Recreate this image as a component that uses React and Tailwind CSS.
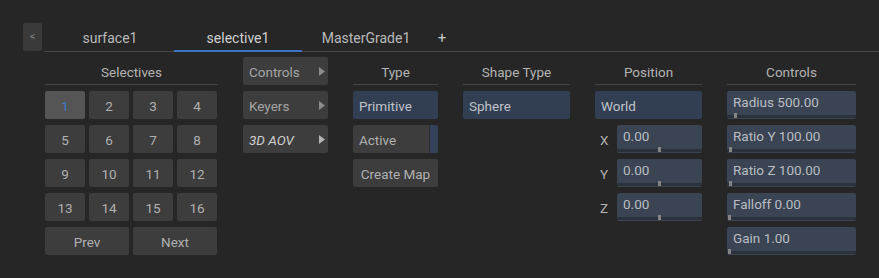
import React, { useState } from 'react';

const font = { fontFamily: 'Roboto, "Noto Sans", sans-serif' };

const Arrow = ({ bright }) => (
  <svg width="6" height="9" viewBox="0 0 6 9" className="ml-auto">
    <path d="M0 0 L6 4.5 L0 9 Z" fill={bright ? '#b5b5b5' : '#8c8c8c'} />
  </svg>
);

const Header = ({ children }) => (
  <div className="h-[28px] pt-[3px] flex items-center justify-center border-b border-[#454545] text-[#b3b3b3]">
    {children}
  </div>
);

// slider field with a small handle on a dark track at the bottom
const Slider = ({ label, pos, width = 'w-full' }) => (
  <div className={`${width} h-[28px] rounded-[2px] bg-[#3a4452] flex flex-col`}>
    <div className="flex-1 flex items-center pl-[6px] text-[#b9bdc3] leading-none">{label}</div>
    <div className="h-[3px] mb-px bg-[#2b323c] relative">
      <div className="absolute bottom-0 w-[3px] h-[5px] bg-[#858585]" style={{ left: pos }} />
    </div>
  </div>
);

export default function App() {
  const [tab, setTab] = useState(1);
  const [sel, setSel] = useState(1);
  const tabs = ['surface1', 'selective1', 'MasterGrade1'];

  return (
    <div className="w-[879px] h-[278px] bg-[#262626] text-[13.5px] overflow-hidden" style={font}>
      {/* Tabs */}
      <div className="flex pt-[23px] pl-[23px]">
        <div className="w-[19px] h-[28px] rounded-[2px] bg-[#3a3a3a] flex items-center justify-center text-[#7a7a7a] text-[11px]">&lt;</div>
        <div className="flex-1 ml-[2px] h-[29px] flex border-b border-[#474747] pl-[2px] text-[14px]">
          {tabs.map((t, i) => (
            <div
              key={t}
              onClick={() => setTab(i)}
              className={`w-[128px] pt-[3px] flex items-center justify-center ${i === tab ? 'border-b-2 border-[#3b73c2] -mb-px text-[#cfcfcf]' : 'text-[#b9b9b9]'}`}
            >
              {t}
            </div>
          ))}
          <div className="w-[24px] pt-[3px] flex items-center justify-center text-[#c8c8c8] text-[15px]">+</div>
        </div>
      </div>

      {/* Panels */}
      <div className="flex gap-[25px] pl-[45px] pt-[5px]">
        {/* Selectives */}
        <div className="w-[173px]">
          <Header>Selectives</Header>
          <div className="mt-[6px] w-[172px] grid grid-cols-4 gap-x-[4px] gap-y-[6px]">
            {Array.from({ length: 16 }, (_, i) => i + 1).map((n) => (
              <div
                key={n}
                onClick={() => setSel(n)}
                className={`h-[28px] pt-[2px] rounded-[2px] flex items-center justify-center ${n === sel ? 'bg-[#555555] text-[#3f7acb]' : 'bg-[#3d3d3d] text-[#b0b0b0]'}`}
              >
                {n}
              </div>
            ))}
            <div className="col-span-2 h-[28px] pt-[2px] rounded-[2px] bg-[#3d3d3d] text-[#b0b0b0] flex items-center justify-center">Prev</div>
            <div className="col-span-2 h-[28px] pt-[2px] rounded-[2px] bg-[#3d3d3d] text-[#b0b0b0] flex items-center justify-center">Next</div>
          </div>
        </div>

        {/* Menu */}
        <div className="w-[85px] flex flex-col gap-[6px]">
          {['Controls', 'Keyers', '3D AOV'].map((m, i) => (
            <div key={m} className="h-[28px] rounded-[2px] bg-[#3d3d3d] flex items-center pl-[6px] pr-[3px]">
              <span className={`pt-[2px] ${i === 2 ? 'italic text-[#cfcfcf]' : 'text-[#a5a5a5]'}`}>{m}</span>
              <Arrow bright={i === 2} />
            </div>
          ))}
        </div>

        {/* Type */}
        <div className="w-[85px]">
          <Header>Type</Header>
          <div className="mt-[6px] flex flex-col gap-[6px]">
            <div className="h-[28px] pt-[2px] rounded-[2px] bg-[#323f52] text-[#bfc3c9] flex items-center pl-[6px]">Primitive</div>
            <div className="h-[28px] rounded-[2px] bg-[#3d3d3d] text-[#b0b0b0] flex overflow-hidden">
              <div className="flex-1 pt-[2px] flex items-center pl-[6px]">Active</div>
              <div className="w-[9px] bg-[#34425a] border-l border-[#2c2c2c]" />
            </div>
            <div className="h-[28px] pt-[2px] rounded-[2px] bg-[#3d3d3d] text-[#b0b0b0] flex items-center justify-center">Create Map</div>
          </div>
        </div>

        {/* Shape Type */}
        <div className="w-[107px]">
          <Header>Shape Type</Header>
          <div className="mt-[6px] h-[28px] pt-[2px] rounded-[2px] bg-[#323f52] text-[#bfc3c9] flex items-center pl-[6px]">Sphere</div>
        </div>

        {/* Position */}
        <div className="w-[107px]">
          <Header>Position</Header>
          <div className="mt-[6px] flex flex-col gap-[6px]">
            <div className="h-[28px] pt-[2px] rounded-[2px] bg-[#323f52] text-[#bfc3c9] flex items-center pl-[6px]">World</div>
            {['X', 'Y', 'Z'].map((a) => (
              <div key={a} className="flex items-center">
                <div className="w-[22px] pl-[5px] text-[#b0b0b0] pt-[3px]">{a}</div>
                <Slider label="0.00" pos="41px" width="w-[85px]" />
              </div>
            ))}
          </div>
        </div>

        {/* Controls */}
        <div className="w-[129px]">
          <Header>Controls</Header>
          <div className="mt-[6px] flex flex-col gap-[6px]">
            <Slider label="Radius 500.00" pos="7px" />
            <Slider label="Ratio Y 100.00" pos="2px" />
            <Slider label="Ratio Z 100.00" pos="2px" />
            <Slider label="Falloff 0.00" pos="1px" />
            <Slider label="Gain 1.00" pos="1px" />
          </div>
        </div>
      </div>
    </div>
  );
}
